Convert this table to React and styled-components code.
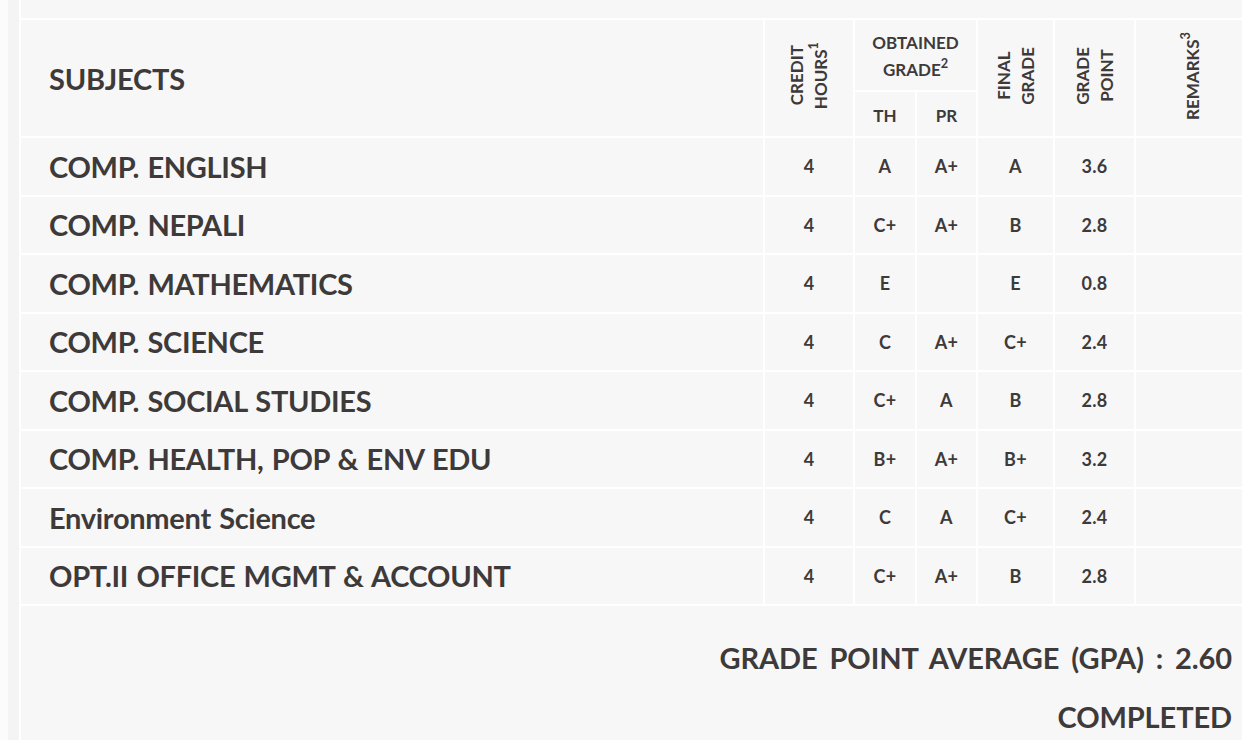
import styled, { createGlobalStyle } from "styled-components";

const Global = createGlobalStyle`
  html, body {
    margin: 0;
    overflow: hidden;
    background: #fbfbfb;
  }
  body {
    font-family: "Lato", "Open Sans", sans-serif;
    color: #3e3a3a;
  }
`;

const subjects = [
  { name: "COMP. ENGLISH", credit: 4, th: "A", pr: "A+", final: "A", gp: "3.6" },
  { name: "COMP. NEPALI", credit: 4, th: "C+", pr: "A+", final: "B", gp: "2.8" },
  { name: "COMP. MATHEMATICS", credit: 4, th: "E", pr: "", final: "E", gp: "0.8" },
  { name: "COMP. SCIENCE", credit: 4, th: "C", pr: "A+", final: "C+", gp: "2.4" },
  { name: "COMP. SOCIAL STUDIES", credit: 4, th: "C+", pr: "A", final: "B", gp: "2.8" },
  { name: "COMP. HEALTH, POP & ENV EDU", credit: 4, th: "B+", pr: "A+", final: "B+", gp: "3.2" },
  { name: "Environment Science", credit: 4, th: "C", pr: "A", final: "C+", gp: "2.4" },
  { name: "OPT.II OFFICE MGMT & ACCOUNT", credit: 4, th: "C+", pr: "A+", final: "B", gp: "2.8" },
];

// column widths of the grade table, left to right
const columns = [742, 88, 60, 59, 75, 79, 113];

export default function App() {
  return (
    <>
      <Global />
      <Page>
        <Panel>
          <Card>
            <TopStub />
            <GradeTable>
              <colgroup>
                {columns.map((w, i) => (
                  <col key={i} style={{ width: w }} />
                ))}
              </colgroup>
              <thead>
                <tr>
                  <SubjectHead rowSpan={2}>SUBJECTS</SubjectHead>
                  <HeadCell rowSpan={2}>
                    <Vertical>
                      CREDIT
                      <br />
                      HOURS<sup>1</sup>
                    </Vertical>
                  </HeadCell>
                  <GroupHead colSpan={2}>
                    OBTAINED
                    <br />
                    GRADE<sup>2</sup>
                  </GroupHead>
                  <HeadCell rowSpan={2}>
                    <Vertical>
                      FINAL
                      <br />
                      GRADE
                    </Vertical>
                  </HeadCell>
                  <HeadCell rowSpan={2}>
                    <Vertical>
                      GRADE
                      <br />
                      POINT
                    </Vertical>
                  </HeadCell>
                  <HeadCell rowSpan={2}>
                    <Vertical>
                      REMARKS<sup>3</sup>
                    </Vertical>
                  </HeadCell>
                </tr>
                <tr>
                  <SubHead>TH</SubHead>
                  <SubHead>PR</SubHead>
                </tr>
              </thead>
              <tbody>
                {subjects.map((s) => (
                  <tr key={s.name}>
                    <SubjectCell>{s.name}</SubjectCell>
                    <Cell>{s.credit}</Cell>
                    <Cell>{s.th}</Cell>
                    <Cell>{s.pr}</Cell>
                    <Cell>{s.final}</Cell>
                    <Cell>{s.gp}</Cell>
                    <Cell />
                  </tr>
                ))}
              </tbody>
            </GradeTable>
            <Summary>
              <SummaryLine>GRADE POINT AVERAGE (GPA) : 2.60</SummaryLine>
              <SummaryLine>COMPLETED</SummaryLine>
            </Summary>
          </Card>
        </Panel>
      </Page>
    </>
  );
}

const Page = styled.div`
  padding-left: 8px;
  width: 1240px;
`;

const Panel = styled.div`
  background: #f4f4f4;
  padding-left: 11px;
  min-height: 740px;
`;

const Card = styled.div`
  width: 1229px;
  min-height: 740px;
  background: #f7f7f8;
  border-left: 2px solid #ffffff;
  box-sizing: border-box;
`;

const TopStub = styled.div`
  height: 18px;
`;

const GradeTable = styled.table`
  table-layout: fixed;
  border-collapse: separate;
  border-spacing: 2px;
  background: #ffffff;
  margin-left: -2px;
  width: 1232px;

  sup {
    font-size: 0.75em;
    line-height: 0;
    vertical-align: 0.65em;
  }
`;

const HeadCell = styled.th`
  background: #f7f7f8;
  padding: 0;
  font-size: 17px;
  font-weight: 700;
  text-align: center;
  vertical-align: middle;
`;

const SubjectHead = styled(HeadCell)`
  text-align: left;
  padding-left: 28px;
  font-size: 29px;
  letter-spacing: -0.2px;
`;

const GroupHead = styled(HeadCell)`
  height: 70px;
  line-height: 27px;
  padding-top: 2px;
  box-sizing: border-box;
`;

const SubHead = styled(HeadCell)`
  height: 44px;
  padding-top: 3px;
  box-sizing: border-box;
`;

const Vertical = styled.div`
  display: inline-block;
  writing-mode: vertical-rl;
  transform: rotate(180deg);
  line-height: 24px;
  text-align: center;
`;

const Cell = styled.td`
  background: #f7f7f8;
  height: 56.5px;
  padding: 0;
  text-align: center;
  vertical-align: middle;
  font-size: 18px;
  font-weight: 700;
  letter-spacing: 0.3px;
`;

const SubjectCell = styled(Cell)`
  text-align: left;
  padding-left: 28px;
  font-size: 29px;
  letter-spacing: -0.3px;
  word-spacing: 1.5px;
`;

const Summary = styled.div`
  padding: 22px 16px 0 0;
  text-align: right;
`;

const SummaryLine = styled.div`
  font-size: 29px;
  font-weight: 700;
  line-height: 59px;
  letter-spacing: -0.1px;
  word-spacing: 5px;
`;
